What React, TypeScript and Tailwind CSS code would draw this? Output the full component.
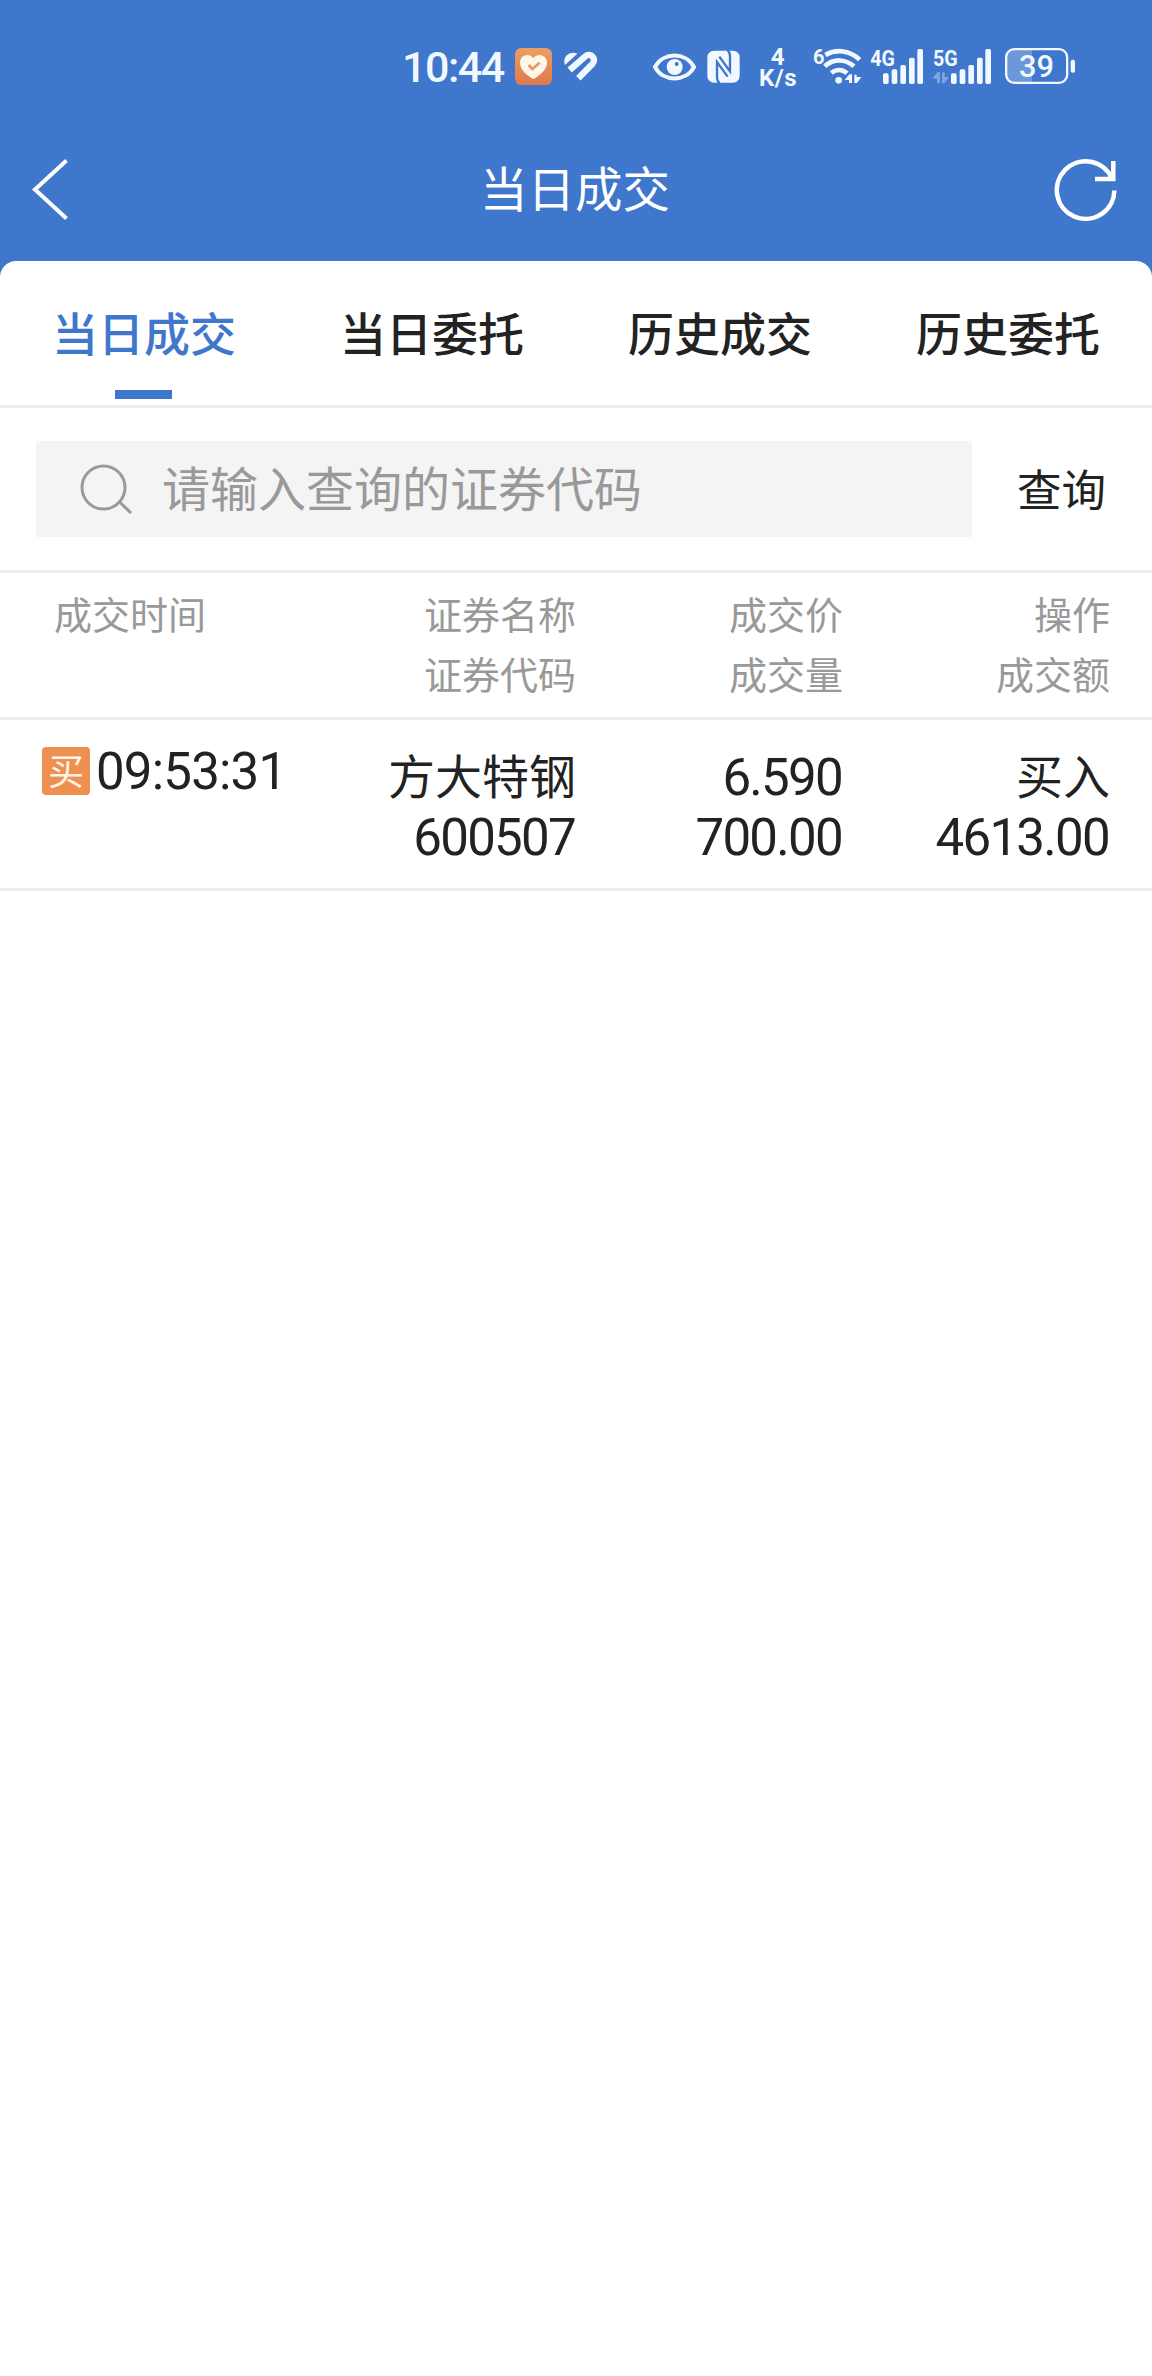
import React from "react";

type Trade = {
    id: number;
    time: string;
    name: string;
    code: string;
    price: string;
    volume: string;
    side: string;
    amount: string;
};

const TABS = ["当日成交", "当日委托", "历史成交", "历史委托"];

const TRADES: Trade[] = [
    {
        id: 1,
        time: "09:53:31",
        name: "方大特钢",
        code: "600507",
        price: "6.590",
        volume: "700.00",
        side: "买入",
        amount: "4613.00",
    },
];

const SIGNAL_BARS = [
    { x: 0, y: 130 },
    { x: 26, y: 118 },
    { x: 52, y: 105 },
    { x: 78, y: 83 },
    { x: 103, y: 57 },
];

const Signal: React.FC<{ label: string; left: number; bars: number }> = ({ label, left, bars }) => (
    <>
        <text x={left} y="108" fontSize="67" fontWeight="700" textLength="74" lengthAdjust="spacingAndGlyphs">
            {label}
        </text>
        {SIGNAL_BARS.map((bar) => (
            <rect key={bar.x} x={bars + bar.x} y={bar.y} width="17" height={162 - bar.y} rx="5" />
        ))}
    </>
);

const StatusBar: React.FC = () => (
    <div className="flex h-[132px] items-start pt-[46px] pl-[402px] text-[#f2f8ff]">
        <span className="w-[113px] text-[43px] leading-[43px] font-medium tracking-[-1.5px] whitespace-nowrap">10:44</span>

        <svg className="h-10 w-[37px]" viewBox="375 48 111 120">
            <defs>
                <linearGradient id="health" x1="0" y1="0" x2="0" y2="1">
                    <stop offset="0" stopColor="#e9a063" />
                    <stop offset="1" stopColor="#e0794a" />
                </linearGradient>
            </defs>
            <rect x="375" y="54" width="111" height="111" rx="19" fill="url(#health)" />
            <path
                d="M430 147C411 137 390 118 390 98C390 76 417 66 430 85C443 66 471 76 471 98C471 118 449 137 430 147Z"
                fill="#fff6ea"
            />
            <path d="M416 105L427 117L449 98" fill="none" stroke="#e59a5c" strokeWidth="8" />
        </svg>

        <svg className="ml-3 h-10 w-[34px]" viewBox="522 48 102 120" fill="none" stroke="currentColor">
            <path d="M525 105C516 82 537 61 562 71Z" fill="currentColor" stroke="none" />
            <path d="M539 120L586 79C601 66 622 87 607 102L565 145" strokeWidth="19" />
        </svg>

        <svg className="ml-[54px] h-10 w-[45px]" viewBox="33 48 135 120">
            <path
                d="M42 111C66 65 135 65 159 111C135 157 66 157 42 111Z"
                fill="none"
                stroke="currentColor"
                strokeWidth="12"
            />
            <circle cx="101" cy="111" r="24" fill="currentColor" />
            <circle cx="107" cy="102" r="6" fill="#3f77cc" />
        </svg>

        <svg className="ml-[10px] h-10 w-[34px]" viewBox="201 48 102 120">
            <rect x="202" y="62" width="97" height="96" rx="20" fill="currentColor" />
            <g fill="none" stroke="#3f77cc" strokeWidth="7">
                <path d="M239 160C232 155 231 149 231 141V96L263 140" />
                <path d="M262 60C269 65 270 71 270 79V124L238 80" />
            </g>
        </svg>

        <div className="mt-[1px] ml-[17px] flex h-10 w-10 flex-col items-center text-[24px] leading-[20px] font-bold tracking-[0.5px]">
            <span>4</span>
            <span className="leading-[22px]">K/s</span>
        </div>

        <span className="mt-px ml-[15px] w-[10px] text-[20px] leading-[20px] font-bold">6</span>
        <svg className="h-10 w-[39px]" viewBox="547 48 117 120" fill="none" stroke="currentColor">
            <path d="M554 75C588 56 628 61 657 89" strokeWidth="14" />
            <path d="M552 109C580 85 613 86 640 109" strokeWidth="14" />
            <path d="M572 129C586 117 605 117 619 130" strokeWidth="14" />
            <circle cx="594" cy="151" r="10" fill="currentColor" stroke="none" />
            <path d="M612 150L626 133H634V159H625V150ZM641 134H648V141H662L649 159H641Z" fill="currentColor" stroke="none" />
        </svg>

        <svg className="ml-2 h-10 w-[54px]" viewBox="30 48 162 120" fill="currentColor">
            <Signal label="4G" left={31} bars={69} />
        </svg>

        <svg className="ml-2 h-10 w-[60px]" viewBox="216 48 180 120" fill="currentColor">
            <Signal label="5G" left={219} bars={273} />
            <path d="M217 145L233 126H240V160H231V147ZM246 127H254V141H267L253 160H246Z" opacity=".35" />
        </svg>

        <svg className="ml-3 h-10 w-[73px]" viewBox="432 48 219 120" fill="currentColor">
            <path d="M462 58H516V158H462C445 158 438 150 438 136V80C438 66 445 58 462 58Z" opacity=".25" />
            <rect x="438.500" y="57.500" width="183" height="101" rx="24" fill="none" stroke="currentColor" strokeWidth="7" />
            <rect x="632" y="89" width="13" height="39" rx="6" />
            <text x="477" y="140" fontSize="92" fontWeight="500" textLength="105" lengthAdjust="spacingAndGlyphs">39</text>
        </svg>
    </div>
);

const Header: React.FC = () => (
    <div className="grid h-[129px] grid-cols-[1fr_auto_1fr] items-start pr-[34px] pl-8 text-white">
        <button className="justify-self-start pt-6">
            <svg className="h-[68px] w-10" viewBox="0 0 40 68" fill="none" stroke="currentColor" strokeWidth="4">
                <path d="M34.500 4.500L3 33.500L34.500 62.500" />
            </svg>
        </button>
        <h1 className="pt-[29px] text-[47.500px] leading-[60px]">当日成交</h1>
        <button className="justify-self-end pt-6">
            <svg className="h-[68px] w-[66px]" viewBox="0 0 66 68" fill="none" stroke="currentColor" strokeWidth="4.500">
                <path d="M62.400 34.500A28.800 28.800 0 1 1 60 22.500" />
                <path d="M61.300 5V23H43" />
            </svg>
        </button>
    </div>
);

const SearchBar: React.FC = () => (
    <div className="flex h-[165px] items-center border-b-3 border-[#ededed] pl-9">
        <div className="flex h-24 w-[936px] items-center bg-[#f4f4f4] pl-[44px] text-[#999999]">
            <svg className="h-[52px] w-[54px]" viewBox="0 0 54 52" fill="none" stroke="currentColor" strokeWidth="3">
                <circle cx="23.500" cy="24.500" r="21.500" />
                <path d="M38.500 38L51 50" />
            </svg>
            <span className="mt-[4px] ml-[28px] text-[48px] leading-[60px]">请输入查询的证券代码</span>
        </div>
        <button className="mt-[6px] ml-[45px] text-[44.500px] leading-[60px] text-[#222222]">查询</button>
    </div>
);

const TradeTable: React.FC = () => (
    <div>
        <div className="grid h-[147px] grid-cols-[522px_267px_267px] border-b-3 border-[#ededed] pt-[13px] pl-[54px] text-right text-[38px] leading-[60px] text-[#999999]">
            <div className="flex justify-between">
                <span>成交时间</span>
                <span>证券名称<br />证券代码</span>
            </div>
            <div>成交价<br />成交量</div>
            <div>操作<br />成交额</div>
        </div>
        {TRADES.map((trade) => (
            <div
                key={trade.id}
                className="grid h-[171px] grid-cols-[534px_267px_267px] border-b-3 border-[#ededed] pt-[27px] pl-[42px] text-right text-[51px] leading-[60px] tracking-[-1.7px] text-[#222222]"
            >
                <div className="flex justify-between">
                    <div className="flex h-12 items-center">
                        <span className="flex h-12 w-12 items-center justify-center rounded-[4px] bg-[#ee904f] pt-[3px] text-[36px] leading-none tracking-normal text-[#fff6e8]">
                            买
                        </span>
                        <span className="mt-[2px] ml-[6px] tracking-[-0.8px]">{trade.time}</span>
                    </div>
                    <div className="pt-px">
                        <div className="text-[47px] tracking-normal">{trade.name}</div>
                        <div className="pr-px">{trade.code}</div>
                    </div>
                </div>
                <div className="pt-px pr-px">
                    <div>{trade.price}</div>
                    <div>{trade.volume}</div>
                </div>
                <div className="pt-px">
                    <div className="text-[47px] tracking-normal">{trade.side}</div>
                    <div className="pr-px">{trade.amount}</div>
                </div>
            </div>
        ))}
    </div>
);

const App: React.FC = () => {
    return (
        <div className="min-h-[2376px] w-[1152px] bg-[#3f77cc] font-[Roboto,'Noto_Sans_CJK_SC',sans-serif]">
            <StatusBar />
            <Header />
            <div className="min-h-[2115px] rounded-t-[16px] bg-white">
                <div className="grid h-[147px] grid-cols-4 border-b-3 border-[#ededed]">
                    {TABS.map((tab, i) => (
                        <div
                            key={tab}
                            className={`flex flex-col items-center pt-[44px] text-[46px] leading-[60px] font-medium ${i === 0 ? "text-[#3f77cc]" : "text-[#222222]"}`}
                        >
                            {tab}
                            {i === 0 && <span className="mt-[25px] mr-px h-[9px] w-[57px] bg-[#3f77cc]" />}
                        </div>
                    ))}
                </div>
                <SearchBar />
                <TradeTable />
            </div>
        </div>
    );
};

export default App;
